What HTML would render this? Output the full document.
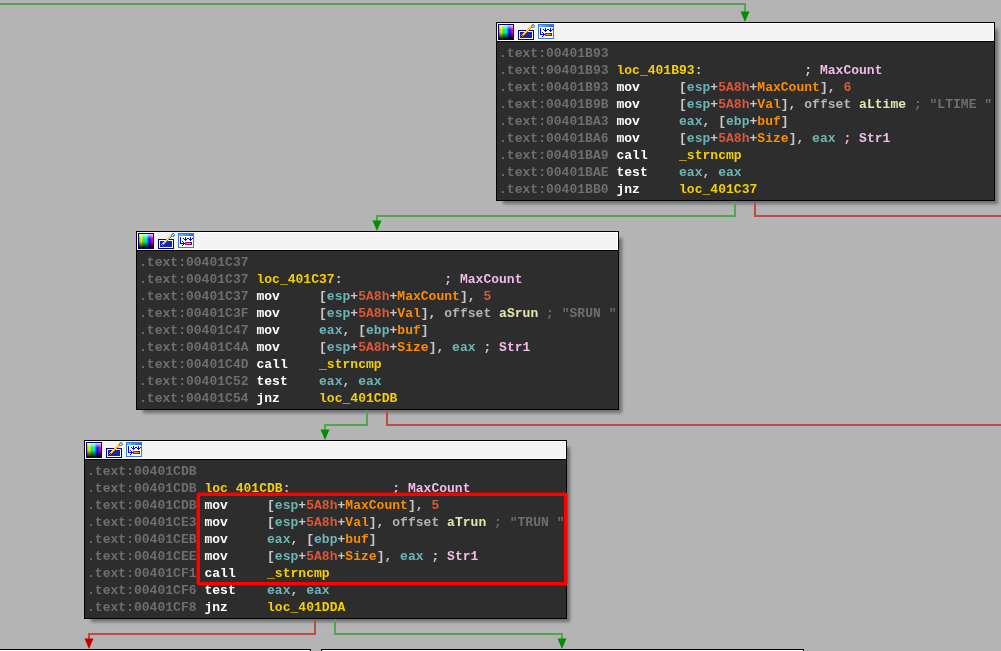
<!DOCTYPE html>
<html><head><meta charset="utf-8"><style>
html,body{margin:0;padding:0}
body{width:1001px;height:651px;overflow:hidden;background:#b4b4b4;position:relative;font-family:"Liberation Mono",monospace}
.edges{position:absolute;left:0;top:0;z-index:2}
.hls{position:absolute;left:0;top:0;z-index:3}
.blk{position:absolute;box-sizing:border-box;border:1px solid #000;background:#2d2d2d;box-shadow:5px 5px 3px -2px rgba(0,0,0,0.38);z-index:1}
.hdr{position:relative;box-sizing:border-box;height:18px;border:1px solid #fff;background:#f4f4f4}
.ic{position:absolute;left:0;top:0;display:block}
.sep{height:1px;background:#000}
.body{will-change:transform;padding:3px 0 0 2px;font-size:13px;font-weight:bold;line-height:17px;white-space:pre;letter-spacing:0.025px;color:#ddd}
.ln{height:17px}
.a{color:#6e6e6e} .l{color:#f5d000} .m{color:#fff} .p{color:#c8c8c8} .r{color:#6cb6b6}
.n{color:#dc5838} .v{color:#ff8c00} .o{color:#b4b4b4} .s{color:#e6e6b0} .c{color:#6e6e6e} .k{color:#f0bce8}
.hl{position:absolute;box-sizing:border-box;border:3px solid #ff0000;border-right-width:4px;border-radius:2px;z-index:3}
.bot{position:absolute;box-sizing:border-box;border:1px solid #000;background:#f3f3f3;z-index:1}
.bot::after{content:"";position:absolute;left:0;right:0;top:0;height:1px;background:#fff}
</style></head><body>
<svg class="edges" width="1001" height="651"><rect x="0" y="3" width="746" height="2" fill="rgb(84,164,84)"/><rect x="744" y="3" width="2" height="10" fill="rgb(84,164,84)"/><path d="M740.5 11.5 H749.5 L745 22 Z" fill="#008f00"/><rect x="734" y="201" width="2" height="16" fill="rgb(84,164,84)"/><rect x="376" y="215" width="360" height="2" fill="rgb(84,164,84)"/><rect x="376" y="215" width="2" height="7" fill="rgb(84,164,84)"/><path d="M372.5 220.5 H381.5 L377 231 Z" fill="#008f00"/><rect x="754" y="201" width="2" height="16" fill="rgb(188,76,76)"/><rect x="754" y="215" width="247" height="2" fill="rgb(188,76,76)"/><rect x="366" y="410" width="2" height="16" fill="rgb(84,164,84)"/><rect x="324" y="424" width="44" height="2" fill="rgb(84,164,84)"/><rect x="324" y="424" width="2" height="7" fill="rgb(84,164,84)"/><path d="M320.5 429.5 H329.5 L325 440 Z" fill="#008f00"/><rect x="386" y="410" width="2" height="16" fill="rgb(188,76,76)"/><rect x="386" y="424" width="615" height="2" fill="rgb(188,76,76)"/><rect x="314" y="619" width="2" height="16" fill="rgb(188,76,76)"/><rect x="88" y="633" width="228" height="2" fill="rgb(188,76,76)"/><rect x="88" y="633" width="2" height="7" fill="rgb(188,76,76)"/><path d="M84.5 638.5 H93.5 L89 649 Z" fill="#c40000"/><rect x="334" y="619" width="2" height="16" fill="rgb(84,164,84)"/><rect x="334" y="633" width="229" height="2" fill="rgb(84,164,84)"/><rect x="561" y="633" width="2" height="7" fill="rgb(84,164,84)"/><path d="M557.5 638.5 H566.5 L562 649 Z" fill="#008f00"/></svg>
<div class="blk" style="left:496px;top:22px;width:499px;height:179px">
<div class="hdr"><svg class="ic" width="60" height="16" viewBox="0 0 60 16">
<defs>
<linearGradient id="hue" x1="0" y1="0" x2="1" y2="0">
<stop offset="0" stop-color="#ff7000"/><stop offset="0.15" stop-color="#e8ff00"/><stop offset="0.32" stop-color="#10ff10"/><stop offset="0.52" stop-color="#00f0f0"/><stop offset="0.72" stop-color="#0010ff"/><stop offset="1" stop-color="#ff00b0"/>
</linearGradient>
<linearGradient id="shade" x1="0" y1="0" x2="0" y2="1">
<stop offset="0" stop-color="#fff" stop-opacity="0.85"/><stop offset="0.3" stop-color="#fff" stop-opacity="0.1"/><stop offset="0.5" stop-color="#000" stop-opacity="0"/><stop offset="1" stop-color="#000" stop-opacity="0.95"/>
</linearGradient>
<linearGradient id="tb" x1="0" y1="0" x2="1" y2="0">
<stop offset="0" stop-color="#40d8f8"/><stop offset="1" stop-color="#2a60d8"/>
</linearGradient>
<linearGradient id="rb" x1="0" y1="0" x2="1" y2="0"><stop offset="0" stop-color="#c01878"/><stop offset="1" stop-color="#580838"/></linearGradient>
</defs>
<g shape-rendering="crispEdges">
<rect x="0" y="0" width="16" height="16" fill="#000078"/>
<rect x="1" y="1" width="14" height="14" fill="url(#hue)"/>
<rect x="1" y="1" width="14" height="14" fill="url(#shade)"/>
<rect x="20" y="6" width="16" height="10" fill="#000088"/>
<rect x="21" y="7" width="14" height="8" fill="#f8f8ff"/>
<rect x="22" y="8" width="12" height="6" fill="#1028b8"/>
<rect x="40" y="0" width="16" height="15" fill="#3a7ae0"/>
<rect x="41" y="1" width="14" height="2" fill="url(#tb)"/>
<rect x="41" y="3" width="14" height="11" fill="#ffffff"/>
<g fill="#0000f0">
<rect x="42" y="4" width="1" height="7"/>
<rect x="42" y="10" width="5" height="1"/>
<rect x="44" y="8" width="1" height="1"/><rect x="45" y="9" width="1" height="1"/><rect x="45" y="11" width="1" height="1"/><rect x="44" y="12" width="1" height="1"/>
<rect x="45" y="5" width="1" height="1"/>
<rect x="47" y="4" width="1" height="4"/><rect x="46" y="6" width="3" height="1"/>
<rect x="49" y="5" width="2" height="1"/>
<rect x="52" y="4" width="1" height="4"/><rect x="51" y="6" width="3" height="1"/>
<rect x="54" y="5" width="1" height="1"/>
</g>
<rect x="47" y="9" width="7" height="3" fill="url(#rb)"/>
<rect x="48" y="10" width="5" height="1" fill="#f8a030"/>
</g>
<g shape-rendering="crispEdges"><rect x="24" y="10" width="1" height="1" fill="#f8c820"/><rect x="25" y="9" width="1" height="1" fill="#f8c820"/><rect x="26" y="8" width="1" height="1" fill="#f8c820"/><rect x="27" y="7" width="1" height="1" fill="#f8c820"/><rect x="28" y="6" width="1" height="1" fill="#f8c820"/><rect x="29" y="5" width="1" height="1" fill="#f8c820"/><rect x="30" y="4" width="1" height="1" fill="#f8c820"/><rect x="31" y="3" width="1" height="1" fill="#f8c820"/><rect x="32" y="2" width="1" height="1" fill="#f8c820"/><rect x="25" y="10" width="1" height="1" fill="#fff4c0"/><rect x="26" y="9" width="1" height="1" fill="#f8d860"/><rect x="27" y="8" width="1" height="1" fill="#fff4c0"/><rect x="28" y="7" width="1" height="1" fill="#f8d860"/><rect x="29" y="6" width="1" height="1" fill="#fff4c0"/><rect x="30" y="5" width="1" height="1" fill="#f8d860"/><rect x="31" y="4" width="1" height="1" fill="#fff4c0"/><rect x="32" y="3" width="1" height="1" fill="#f8d860"/><rect x="25" y="11" width="1" height="1" fill="#e87a18"/><rect x="26" y="10" width="1" height="1" fill="#e87a18"/><rect x="27" y="9" width="1" height="1" fill="#e87a18"/><rect x="28" y="8" width="1" height="1" fill="#e87a18"/><rect x="29" y="7" width="1" height="1" fill="#e87a18"/><rect x="30" y="6" width="1" height="1" fill="#e87a18"/><rect x="31" y="5" width="1" height="1" fill="#e87a18"/><rect x="32" y="4" width="1" height="1" fill="#e87a18"/><rect x="33" y="3" width="1" height="1" fill="#e87a18"/><rect x="23" y="12" width="1" height="1" fill="#181008"/><rect x="24" y="12" width="1" height="1" fill="#c86010"/><rect x="23" y="11" width="1" height="1" fill="#e0a020"/><rect x="34" y="0" width="1" height="1" fill="#4898c8"/><rect x="35" y="0" width="1" height="1" fill="#4898c8"/><rect x="33" y="1" width="1" height="1" fill="#4898c8"/><rect x="34" y="1" width="1" height="1" fill="#4898c8"/><rect x="35" y="1" width="1" height="1" fill="#4898c8"/><rect x="36" y="1" width="1" height="1" fill="#4898c8"/><rect x="33" y="2" width="1" height="1" fill="#4898c8"/><rect x="35" y="2" width="1" height="1" fill="#4898c8"/><rect x="36" y="2" width="1" height="1" fill="#4898c8"/><rect x="34" y="3" width="1" height="1" fill="#4898c8"/><rect x="35" y="3" width="1" height="1" fill="#4898c8"/><rect x="34" y="2" width="1" height="1" fill="#e8f4ff"/><rect x="35" y="1" width="1" height="1" fill="#b8dcf0"/></g>
</svg></div><div class="sep"></div>
<div class="body"><div class="ln"><span class="a">.text:00401B93</span></div><div class="ln"><span class="a">.text:00401B93</span> <span class="l">loc_401B93</span><span class="p">:</span>             <span class="k">; MaxCount</span></div><div class="ln"><span class="a">.text:00401B93</span> <span class="m">mov</span>     <span class="p">[</span><span class="r">esp</span><span class="p">+</span><span class="n">5A8h</span><span class="p">+</span><span class="v">MaxCount</span><span class="p">], </span><span class="n">6</span></div><div class="ln"><span class="a">.text:00401B9B</span> <span class="m">mov</span>     <span class="p">[</span><span class="r">esp</span><span class="p">+</span><span class="n">5A8h</span><span class="p">+</span><span class="v">Val</span><span class="p">], </span><span class="o">offset</span> <span class="s">aLtime</span> <span class="c">; "LTIME "</span></div><div class="ln"><span class="a">.text:00401BA3</span> <span class="m">mov</span>     <span class="r">eax</span><span class="p">, [</span><span class="r">ebp</span><span class="p">+</span><span class="v">buf</span><span class="p">]</span></div><div class="ln"><span class="a">.text:00401BA6</span> <span class="m">mov</span>     <span class="p">[</span><span class="r">esp</span><span class="p">+</span><span class="n">5A8h</span><span class="p">+</span><span class="v">Size</span><span class="p">], </span><span class="r">eax</span> <span class="k">; Str1</span></div><div class="ln"><span class="a">.text:00401BA9</span> <span class="m">call</span>    <span class="l">_strncmp</span></div><div class="ln"><span class="a">.text:00401BAE</span> <span class="m">test</span>    <span class="r">eax</span><span class="p">, </span><span class="r">eax</span></div><div class="ln"><span class="a">.text:00401BB0</span> <span class="m">jnz</span>     <span class="l">loc_401C37</span></div></div></div>

<div class="blk" style="left:136px;top:231px;width:483px;height:179px">
<div class="hdr"><svg class="ic" width="60" height="16" viewBox="0 0 60 16">
<defs>
<linearGradient id="hue" x1="0" y1="0" x2="1" y2="0">
<stop offset="0" stop-color="#ff7000"/><stop offset="0.15" stop-color="#e8ff00"/><stop offset="0.32" stop-color="#10ff10"/><stop offset="0.52" stop-color="#00f0f0"/><stop offset="0.72" stop-color="#0010ff"/><stop offset="1" stop-color="#ff00b0"/>
</linearGradient>
<linearGradient id="shade" x1="0" y1="0" x2="0" y2="1">
<stop offset="0" stop-color="#fff" stop-opacity="0.85"/><stop offset="0.3" stop-color="#fff" stop-opacity="0.1"/><stop offset="0.5" stop-color="#000" stop-opacity="0"/><stop offset="1" stop-color="#000" stop-opacity="0.95"/>
</linearGradient>
<linearGradient id="tb" x1="0" y1="0" x2="1" y2="0">
<stop offset="0" stop-color="#40d8f8"/><stop offset="1" stop-color="#2a60d8"/>
</linearGradient>
<linearGradient id="rb" x1="0" y1="0" x2="1" y2="0"><stop offset="0" stop-color="#c01878"/><stop offset="1" stop-color="#580838"/></linearGradient>
</defs>
<g shape-rendering="crispEdges">
<rect x="0" y="0" width="16" height="16" fill="#000078"/>
<rect x="1" y="1" width="14" height="14" fill="url(#hue)"/>
<rect x="1" y="1" width="14" height="14" fill="url(#shade)"/>
<rect x="20" y="6" width="16" height="10" fill="#000088"/>
<rect x="21" y="7" width="14" height="8" fill="#f8f8ff"/>
<rect x="22" y="8" width="12" height="6" fill="#1028b8"/>
<rect x="40" y="0" width="16" height="15" fill="#3a7ae0"/>
<rect x="41" y="1" width="14" height="2" fill="url(#tb)"/>
<rect x="41" y="3" width="14" height="11" fill="#ffffff"/>
<g fill="#0000f0">
<rect x="42" y="4" width="1" height="7"/>
<rect x="42" y="10" width="5" height="1"/>
<rect x="44" y="8" width="1" height="1"/><rect x="45" y="9" width="1" height="1"/><rect x="45" y="11" width="1" height="1"/><rect x="44" y="12" width="1" height="1"/>
<rect x="45" y="5" width="1" height="1"/>
<rect x="47" y="4" width="1" height="4"/><rect x="46" y="6" width="3" height="1"/>
<rect x="49" y="5" width="2" height="1"/>
<rect x="52" y="4" width="1" height="4"/><rect x="51" y="6" width="3" height="1"/>
<rect x="54" y="5" width="1" height="1"/>
</g>
<rect x="47" y="9" width="7" height="3" fill="url(#rb)"/>
<rect x="48" y="10" width="5" height="1" fill="#f8a030"/>
</g>
<g shape-rendering="crispEdges"><rect x="24" y="10" width="1" height="1" fill="#f8c820"/><rect x="25" y="9" width="1" height="1" fill="#f8c820"/><rect x="26" y="8" width="1" height="1" fill="#f8c820"/><rect x="27" y="7" width="1" height="1" fill="#f8c820"/><rect x="28" y="6" width="1" height="1" fill="#f8c820"/><rect x="29" y="5" width="1" height="1" fill="#f8c820"/><rect x="30" y="4" width="1" height="1" fill="#f8c820"/><rect x="31" y="3" width="1" height="1" fill="#f8c820"/><rect x="32" y="2" width="1" height="1" fill="#f8c820"/><rect x="25" y="10" width="1" height="1" fill="#fff4c0"/><rect x="26" y="9" width="1" height="1" fill="#f8d860"/><rect x="27" y="8" width="1" height="1" fill="#fff4c0"/><rect x="28" y="7" width="1" height="1" fill="#f8d860"/><rect x="29" y="6" width="1" height="1" fill="#fff4c0"/><rect x="30" y="5" width="1" height="1" fill="#f8d860"/><rect x="31" y="4" width="1" height="1" fill="#fff4c0"/><rect x="32" y="3" width="1" height="1" fill="#f8d860"/><rect x="25" y="11" width="1" height="1" fill="#e87a18"/><rect x="26" y="10" width="1" height="1" fill="#e87a18"/><rect x="27" y="9" width="1" height="1" fill="#e87a18"/><rect x="28" y="8" width="1" height="1" fill="#e87a18"/><rect x="29" y="7" width="1" height="1" fill="#e87a18"/><rect x="30" y="6" width="1" height="1" fill="#e87a18"/><rect x="31" y="5" width="1" height="1" fill="#e87a18"/><rect x="32" y="4" width="1" height="1" fill="#e87a18"/><rect x="33" y="3" width="1" height="1" fill="#e87a18"/><rect x="23" y="12" width="1" height="1" fill="#181008"/><rect x="24" y="12" width="1" height="1" fill="#c86010"/><rect x="23" y="11" width="1" height="1" fill="#e0a020"/><rect x="34" y="0" width="1" height="1" fill="#4898c8"/><rect x="35" y="0" width="1" height="1" fill="#4898c8"/><rect x="33" y="1" width="1" height="1" fill="#4898c8"/><rect x="34" y="1" width="1" height="1" fill="#4898c8"/><rect x="35" y="1" width="1" height="1" fill="#4898c8"/><rect x="36" y="1" width="1" height="1" fill="#4898c8"/><rect x="33" y="2" width="1" height="1" fill="#4898c8"/><rect x="35" y="2" width="1" height="1" fill="#4898c8"/><rect x="36" y="2" width="1" height="1" fill="#4898c8"/><rect x="34" y="3" width="1" height="1" fill="#4898c8"/><rect x="35" y="3" width="1" height="1" fill="#4898c8"/><rect x="34" y="2" width="1" height="1" fill="#e8f4ff"/><rect x="35" y="1" width="1" height="1" fill="#b8dcf0"/></g>
</svg></div><div class="sep"></div>
<div class="body"><div class="ln"><span class="a">.text:00401C37</span></div><div class="ln"><span class="a">.text:00401C37</span> <span class="l">loc_401C37</span><span class="p">:</span>             <span class="k">; MaxCount</span></div><div class="ln"><span class="a">.text:00401C37</span> <span class="m">mov</span>     <span class="p">[</span><span class="r">esp</span><span class="p">+</span><span class="n">5A8h</span><span class="p">+</span><span class="v">MaxCount</span><span class="p">], </span><span class="n">5</span></div><div class="ln"><span class="a">.text:00401C3F</span> <span class="m">mov</span>     <span class="p">[</span><span class="r">esp</span><span class="p">+</span><span class="n">5A8h</span><span class="p">+</span><span class="v">Val</span><span class="p">], </span><span class="o">offset</span> <span class="s">aSrun</span> <span class="c">; "SRUN "</span></div><div class="ln"><span class="a">.text:00401C47</span> <span class="m">mov</span>     <span class="r">eax</span><span class="p">, [</span><span class="r">ebp</span><span class="p">+</span><span class="v">buf</span><span class="p">]</span></div><div class="ln"><span class="a">.text:00401C4A</span> <span class="m">mov</span>     <span class="p">[</span><span class="r">esp</span><span class="p">+</span><span class="n">5A8h</span><span class="p">+</span><span class="v">Size</span><span class="p">], </span><span class="r">eax</span> <span class="k">; Str1</span></div><div class="ln"><span class="a">.text:00401C4D</span> <span class="m">call</span>    <span class="l">_strncmp</span></div><div class="ln"><span class="a">.text:00401C52</span> <span class="m">test</span>    <span class="r">eax</span><span class="p">, </span><span class="r">eax</span></div><div class="ln"><span class="a">.text:00401C54</span> <span class="m">jnz</span>     <span class="l">loc_401CDB</span></div></div></div>

<div class="blk" style="left:84px;top:440px;width:483px;height:179px">
<div class="hdr"><svg class="ic" width="60" height="16" viewBox="0 0 60 16">
<defs>
<linearGradient id="hue" x1="0" y1="0" x2="1" y2="0">
<stop offset="0" stop-color="#ff7000"/><stop offset="0.15" stop-color="#e8ff00"/><stop offset="0.32" stop-color="#10ff10"/><stop offset="0.52" stop-color="#00f0f0"/><stop offset="0.72" stop-color="#0010ff"/><stop offset="1" stop-color="#ff00b0"/>
</linearGradient>
<linearGradient id="shade" x1="0" y1="0" x2="0" y2="1">
<stop offset="0" stop-color="#fff" stop-opacity="0.85"/><stop offset="0.3" stop-color="#fff" stop-opacity="0.1"/><stop offset="0.5" stop-color="#000" stop-opacity="0"/><stop offset="1" stop-color="#000" stop-opacity="0.95"/>
</linearGradient>
<linearGradient id="tb" x1="0" y1="0" x2="1" y2="0">
<stop offset="0" stop-color="#40d8f8"/><stop offset="1" stop-color="#2a60d8"/>
</linearGradient>
<linearGradient id="rb" x1="0" y1="0" x2="1" y2="0"><stop offset="0" stop-color="#c01878"/><stop offset="1" stop-color="#580838"/></linearGradient>
</defs>
<g shape-rendering="crispEdges">
<rect x="0" y="0" width="16" height="16" fill="#000078"/>
<rect x="1" y="1" width="14" height="14" fill="url(#hue)"/>
<rect x="1" y="1" width="14" height="14" fill="url(#shade)"/>
<rect x="20" y="6" width="16" height="10" fill="#000088"/>
<rect x="21" y="7" width="14" height="8" fill="#f8f8ff"/>
<rect x="22" y="8" width="12" height="6" fill="#1028b8"/>
<rect x="40" y="0" width="16" height="15" fill="#3a7ae0"/>
<rect x="41" y="1" width="14" height="2" fill="url(#tb)"/>
<rect x="41" y="3" width="14" height="11" fill="#ffffff"/>
<g fill="#0000f0">
<rect x="42" y="4" width="1" height="7"/>
<rect x="42" y="10" width="5" height="1"/>
<rect x="44" y="8" width="1" height="1"/><rect x="45" y="9" width="1" height="1"/><rect x="45" y="11" width="1" height="1"/><rect x="44" y="12" width="1" height="1"/>
<rect x="45" y="5" width="1" height="1"/>
<rect x="47" y="4" width="1" height="4"/><rect x="46" y="6" width="3" height="1"/>
<rect x="49" y="5" width="2" height="1"/>
<rect x="52" y="4" width="1" height="4"/><rect x="51" y="6" width="3" height="1"/>
<rect x="54" y="5" width="1" height="1"/>
</g>
<rect x="47" y="9" width="7" height="3" fill="url(#rb)"/>
<rect x="48" y="10" width="5" height="1" fill="#f8a030"/>
</g>
<g shape-rendering="crispEdges"><rect x="24" y="10" width="1" height="1" fill="#f8c820"/><rect x="25" y="9" width="1" height="1" fill="#f8c820"/><rect x="26" y="8" width="1" height="1" fill="#f8c820"/><rect x="27" y="7" width="1" height="1" fill="#f8c820"/><rect x="28" y="6" width="1" height="1" fill="#f8c820"/><rect x="29" y="5" width="1" height="1" fill="#f8c820"/><rect x="30" y="4" width="1" height="1" fill="#f8c820"/><rect x="31" y="3" width="1" height="1" fill="#f8c820"/><rect x="32" y="2" width="1" height="1" fill="#f8c820"/><rect x="25" y="10" width="1" height="1" fill="#fff4c0"/><rect x="26" y="9" width="1" height="1" fill="#f8d860"/><rect x="27" y="8" width="1" height="1" fill="#fff4c0"/><rect x="28" y="7" width="1" height="1" fill="#f8d860"/><rect x="29" y="6" width="1" height="1" fill="#fff4c0"/><rect x="30" y="5" width="1" height="1" fill="#f8d860"/><rect x="31" y="4" width="1" height="1" fill="#fff4c0"/><rect x="32" y="3" width="1" height="1" fill="#f8d860"/><rect x="25" y="11" width="1" height="1" fill="#e87a18"/><rect x="26" y="10" width="1" height="1" fill="#e87a18"/><rect x="27" y="9" width="1" height="1" fill="#e87a18"/><rect x="28" y="8" width="1" height="1" fill="#e87a18"/><rect x="29" y="7" width="1" height="1" fill="#e87a18"/><rect x="30" y="6" width="1" height="1" fill="#e87a18"/><rect x="31" y="5" width="1" height="1" fill="#e87a18"/><rect x="32" y="4" width="1" height="1" fill="#e87a18"/><rect x="33" y="3" width="1" height="1" fill="#e87a18"/><rect x="23" y="12" width="1" height="1" fill="#181008"/><rect x="24" y="12" width="1" height="1" fill="#c86010"/><rect x="23" y="11" width="1" height="1" fill="#e0a020"/><rect x="34" y="0" width="1" height="1" fill="#4898c8"/><rect x="35" y="0" width="1" height="1" fill="#4898c8"/><rect x="33" y="1" width="1" height="1" fill="#4898c8"/><rect x="34" y="1" width="1" height="1" fill="#4898c8"/><rect x="35" y="1" width="1" height="1" fill="#4898c8"/><rect x="36" y="1" width="1" height="1" fill="#4898c8"/><rect x="33" y="2" width="1" height="1" fill="#4898c8"/><rect x="35" y="2" width="1" height="1" fill="#4898c8"/><rect x="36" y="2" width="1" height="1" fill="#4898c8"/><rect x="34" y="3" width="1" height="1" fill="#4898c8"/><rect x="35" y="3" width="1" height="1" fill="#4898c8"/><rect x="34" y="2" width="1" height="1" fill="#e8f4ff"/><rect x="35" y="1" width="1" height="1" fill="#b8dcf0"/></g>
</svg></div><div class="sep"></div>
<div class="body"><div class="ln"><span class="a">.text:00401CDB</span></div><div class="ln"><span class="a">.text:00401CDB</span> <span class="l">loc_401CDB</span><span class="p">:</span>             <span class="k">; MaxCount</span></div><div class="ln"><span class="a">.text:00401CDB</span> <span class="m">mov</span>     <span class="p">[</span><span class="r">esp</span><span class="p">+</span><span class="n">5A8h</span><span class="p">+</span><span class="v">MaxCount</span><span class="p">], </span><span class="n">5</span></div><div class="ln"><span class="a">.text:00401CE3</span> <span class="m">mov</span>     <span class="p">[</span><span class="r">esp</span><span class="p">+</span><span class="n">5A8h</span><span class="p">+</span><span class="v">Val</span><span class="p">], </span><span class="o">offset</span> <span class="s">aTrun</span> <span class="c">; "TRUN "</span></div><div class="ln"><span class="a">.text:00401CEB</span> <span class="m">mov</span>     <span class="r">eax</span><span class="p">, [</span><span class="r">ebp</span><span class="p">+</span><span class="v">buf</span><span class="p">]</span></div><div class="ln"><span class="a">.text:00401CEE</span> <span class="m">mov</span>     <span class="p">[</span><span class="r">esp</span><span class="p">+</span><span class="n">5A8h</span><span class="p">+</span><span class="v">Size</span><span class="p">], </span><span class="r">eax</span> <span class="k">; Str1</span></div><div class="ln"><span class="a">.text:00401CF1</span> <span class="m">call</span>    <span class="l">_strncmp</span></div><div class="ln"><span class="a">.text:00401CF6</span> <span class="m">test</span>    <span class="r">eax</span><span class="p">, </span><span class="r">eax</span></div><div class="ln"><span class="a">.text:00401CF8</span> <span class="m">jnz</span>     <span class="l">loc_401DDA</span></div></div></div>

<svg class="hls" width="1001" height="651"><rect x="198.25" y="494.25" width="367.5" height="89.5" rx="1" fill="none" stroke="#ff0000" stroke-width="3.5"/></svg>
<div class="bot" style="left:-10px;top:649px;width:321px;height:20px"></div>
<div class="bot" style="left:321px;top:649px;width:483px;height:20px"></div>
</body></html>
